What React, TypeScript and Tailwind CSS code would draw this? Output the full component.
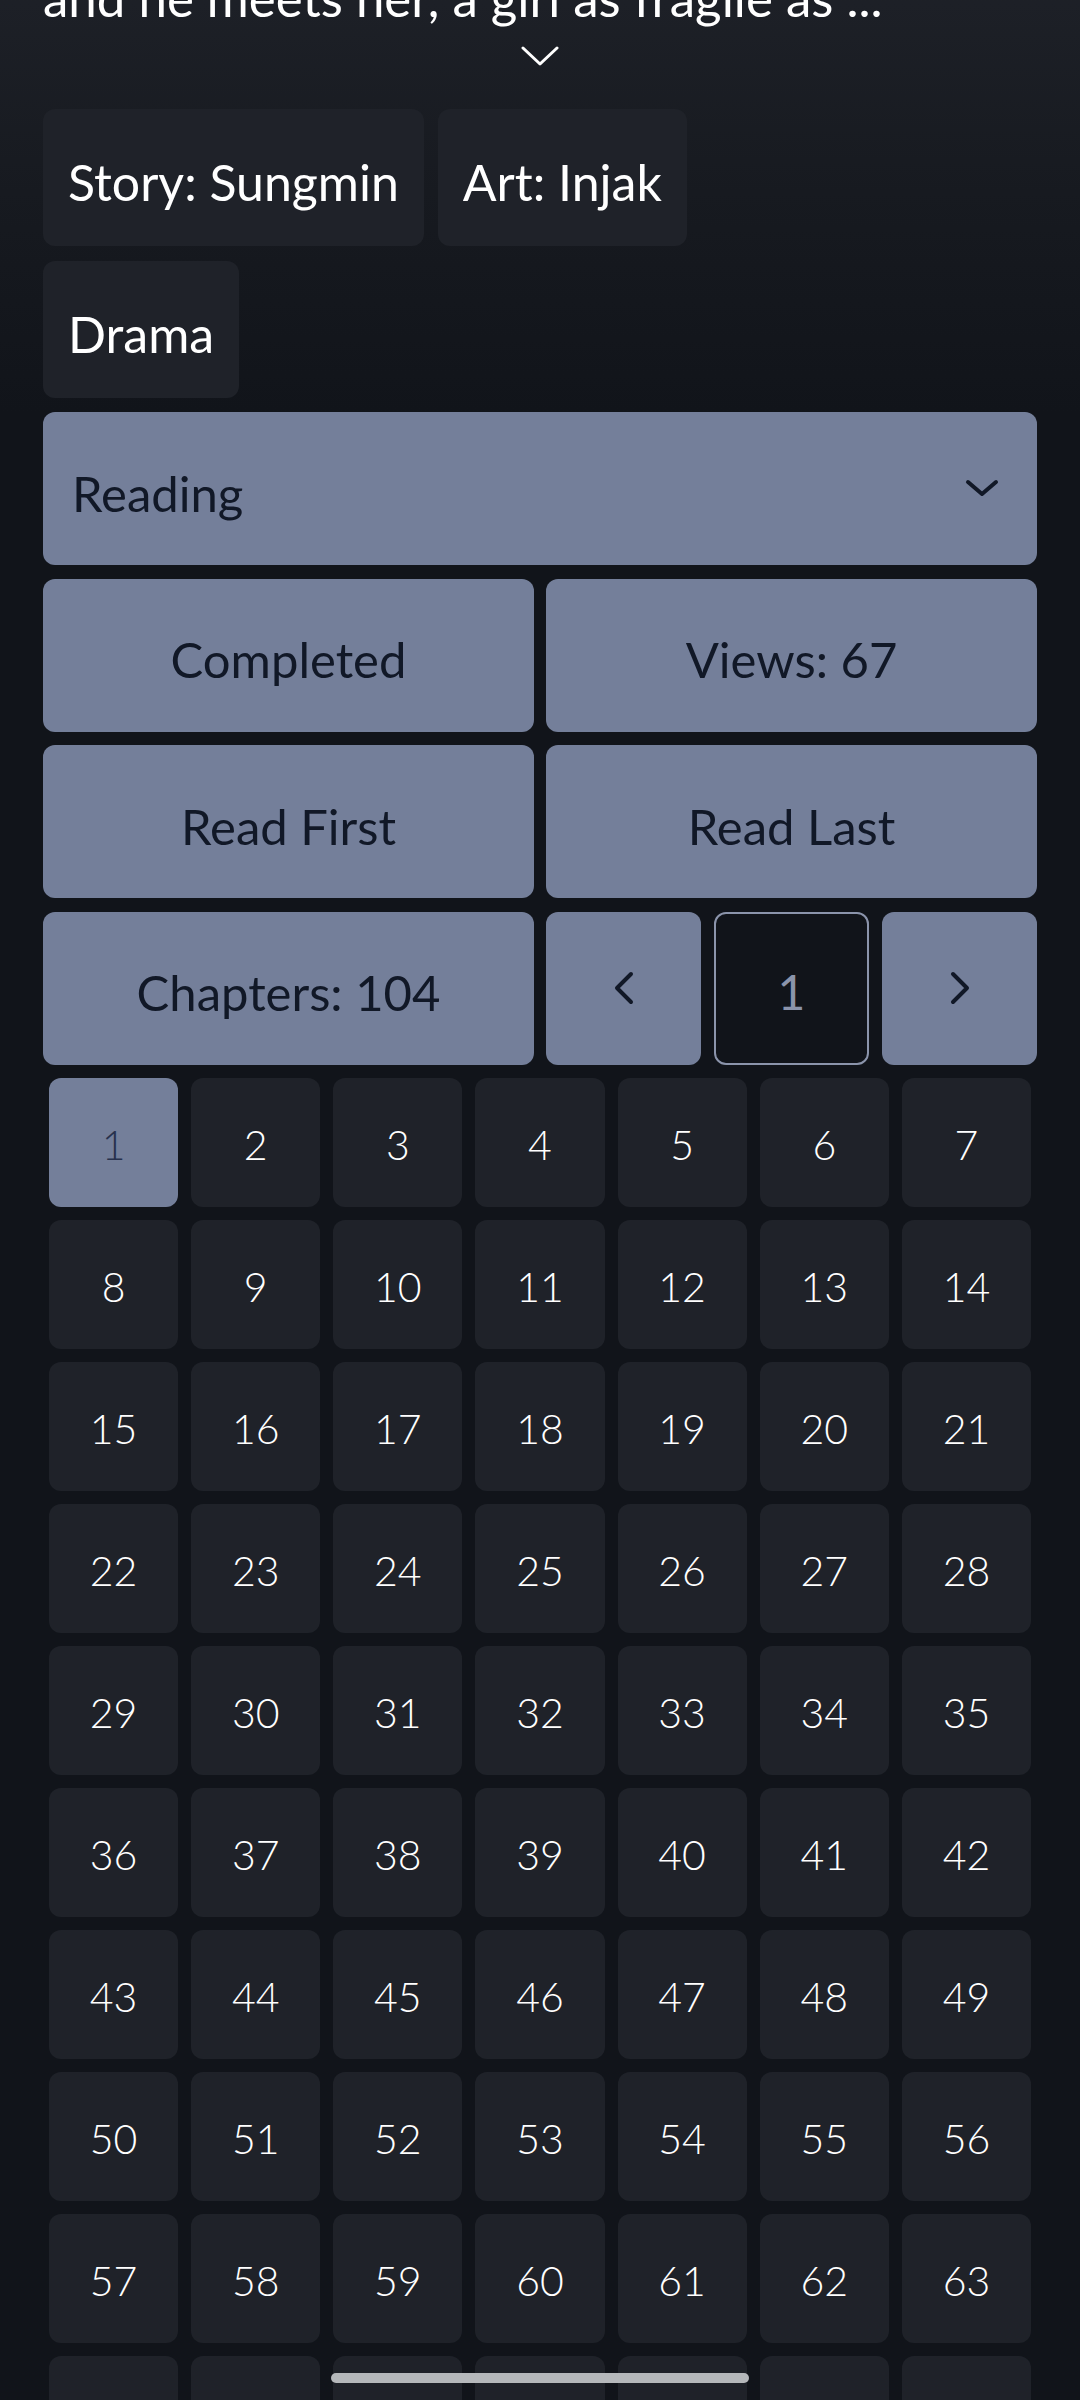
import React from "react";

const chapters = Array.from({ length: 70 }, (_, i) => i + 1);

function Chevron({ dir, className }: { dir: "down" | "left" | "right"; className?: string }) {
  const points =
    dir === "down" ? "3,3 17,15 31,3" : dir === "left" ? "17,3 3,17 17,31" : "3,3 17,17 3,31";
  const size = dir === "down" ? { w: 34, h: 19 } : { w: 20, h: 34 };
  return (
    <svg width={size.w} height={size.h} viewBox={`0 0 ${size.w} ${size.h}`} className={className}>
      <polyline
        points={points}
        fill="none"
        stroke="currentColor"
        strokeWidth={4}
        strokeLinecap="round"
        strokeLinejoin="round"
      />
    </svg>
  );
}

function Tag({ label }: { label: string }) {
  return (
    <div className="flex h-[137px] items-center rounded-[12px] bg-[#1f2229] px-[25px] pt-[10px] text-[50px] text-white">
      {label}
    </div>
  );
}

function SlateButton({ children, icon }: { children: React.ReactNode; icon?: boolean }) {
  return (
    <div
      className={
        icon
          ? "flex h-[153px] items-center justify-center rounded-[12px] bg-[#747f9a] text-[#111827]"
          : "flex h-[153px] items-center justify-center rounded-[12px] bg-[#747f9a] pt-[10px] text-[49px] text-[#111827]"
      }
    >
      {children}
    </div>
  );
}

function App() {
  return (
    <div
      className="relative h-[2400px] overflow-hidden bg-[#11141a]"
      style={{ fontFamily: "Lato, 'Noto Sans', sans-serif" }}
    >
      {/* Description tail + tags */}
      <div className="bg-gradient-to-b from-[#1e2128] via-[#171a20] to-[#11141a] px-[43px] pb-[14px]">
        <p className="-mt-[28px] whitespace-nowrap text-[51px] leading-[51px] text-white">
          and he meets her, a girl as fragile as ...
        </p>
        <div className="mt-[23px] flex justify-center">
          <svg width="38" height="20" viewBox="0 0 38 20" className="text-white">
            <polyline
              points="2,2 19,18 36,2"
              fill="none"
              stroke="currentColor"
              strokeWidth={3}
              strokeLinecap="round"
              strokeLinejoin="round"
            />
          </svg>
        </div>

        <div className="mt-[43px] flex flex-col gap-[15px]">
          <div className="flex flex-wrap gap-[14px]">
            <Tag label="Story: Sungmin" />
            <Tag label="Art: Injak" />
          </div>
          <div className="flex flex-wrap gap-[14px]">
            <Tag label="Drama" />
          </div>
        </div>
      </div>

      {/* Controls */}
      <div className="flex flex-col gap-[13.5px] px-[43px]">
        <div className="flex h-[153px] items-center justify-between rounded-[12px] bg-[#747f9a] pl-[29px] pr-[38px] text-[49px] text-[#111827]">
          <span className="pt-[10px]">Reading</span>
          <Chevron dir="down" />
        </div>

        <div className="grid grid-cols-2 gap-[12px]">
          <SlateButton>Completed</SlateButton>
          <SlateButton>Views: 67</SlateButton>
        </div>

        <div className="grid grid-cols-2 gap-[12px]">
          <SlateButton>Read First</SlateButton>
          <SlateButton>Read Last</SlateButton>
        </div>

        <div className="grid grid-cols-2 gap-[12px]">
          <SlateButton>Chapters: 104</SlateButton>
          <div className="grid grid-cols-3 gap-[13px]">
            <SlateButton icon>
              <Chevron dir="left" />
            </SlateButton>
            <div className="flex h-[153px] items-center justify-center rounded-[12px] border-2 border-[#8b94ab] bg-[#11141a] pt-[8px] text-[48px] text-[#8b94ab]">
              1
            </div>
            <SlateButton icon>
              <Chevron dir="right" />
            </SlateButton>
          </div>
        </div>

        {/* Chapter grid */}
        <div className="grid grid-cols-7 gap-[13px] px-[6px]">
          {chapters.map((n) => (
            <div
              key={n}
              className={
                n === 1
                  ? "flex h-[129px] items-center justify-center rounded-[12px] bg-[#747f9a] pt-[4px] text-[41px] font-light text-[#27314d]"
                  : "flex h-[129px] items-center justify-center rounded-[12px] bg-[#1f2229] pt-[4px] text-[41px] font-light text-white"
              }
            >
              {n}
            </div>
          ))}
        </div>
      </div>

      {/* Gesture bar */}
      <div className="absolute bottom-[17px] left-1/2 h-[10px] w-[418px] -translate-x-1/2 rounded-full bg-[#b5b8bb]" />
    </div>
  );
}

export default App;
